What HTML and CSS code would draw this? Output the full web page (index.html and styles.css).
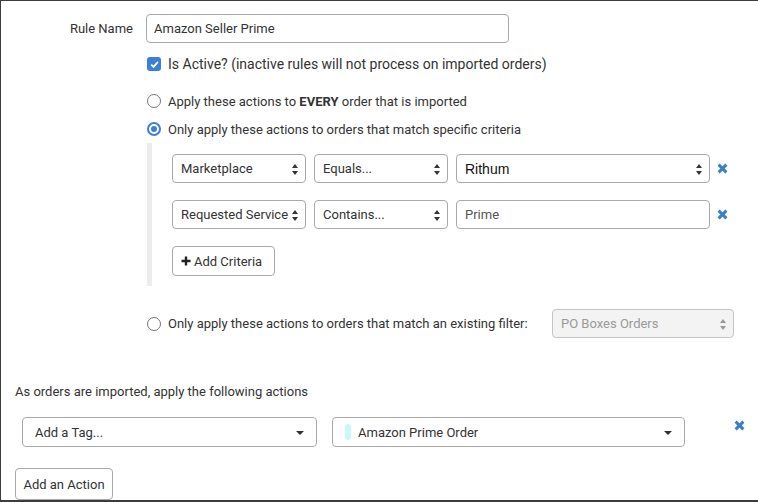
FILE: index.html
```html
<!DOCTYPE html>
<html lang="en">
<head>
    <meta charset="UTF-8">
    <title>Edit Rule</title>
    <link rel="stylesheet" href="styles.css">
</head>
<body>
    <div class="rule-form">
        <div class="name-row">
            <label class="name-label">Rule Name</label>
            <input type="text" class="text-input name-input" value="Amazon Seller Prime">
        </div>

        <div class="options">
            <div class="option-row check-row">
                <span class="checkbox checked">
                    <svg width="9" height="9" viewBox="0 0 9 9"><path d="M1.2 4.6 L3.6 6.9 L7.9 1.9" fill="none" stroke="#fff" stroke-width="1.8"/></svg>
                </span>
                <span>Is Active? (inactive rules will not process on imported orders)</span>
            </div>
            <div class="option-row radio-row first-radio">
                <span class="radio"></span>
                <span>Apply these actions to <b>EVERY</b> order that is imported</span>
            </div>
            <div class="option-row radio-row second-radio">
                <span class="radio checked"></span>
                <span>Only apply these actions to orders that match specific criteria</span>
            </div>

            <div class="criteria">
                <div class="criteria-row">
                    <div class="select field-select">Marketplace<span class="updown"></span></div>
                    <div class="select op-select">Equals...<span class="updown"></span></div>
                    <div class="select value-select">Rithum<span class="updown"></span></div>
                    <span class="remove"></span>
                </div>
                <div class="criteria-row">
                    <div class="select field-select">Requested Service<span class="updown"></span></div>
                    <div class="select op-select">Contains...<span class="updown"></span></div>
                    <div class="text-input value-input">Prime</div>
                    <span class="remove"></span>
                </div>
                <button class="btn add-criteria">
                    <svg width="10" height="10" viewBox="0 0 10 10"><path d="M5 0.5 V9.5 M0.5 5 H9.5" stroke="#222" stroke-width="2.4"/></svg>
                    Add Criteria
                </button>
            </div>

            <div class="option-row radio-row filter-row">
                <span class="radio"></span>
                <span class="filter-text">Only apply these actions to orders that match an existing filter:</span>
                <div class="select filter-select">PO Boxes Orders<span class="updown"></span></div>
            </div>
        </div>

        <div class="actions-title">As orders are imported, apply the following actions</div>
        <div class="action-row">
            <div class="select dropdown action-select">Add a Tag...<span class="caret"></span></div>
            <div class="select dropdown tag-select"><span class="swatch"></span>Amazon Prime Order<span class="caret"></span></div>
            <span class="remove action-remove"></span>
        </div>
        <button class="btn add-action">Add an Action</button>
    </div>
</body>
</html>
```

FILE: styles.css
```css
body {
    margin: 0;
    background: #fff;
    font-family: Roboto, "Liberation Sans", sans-serif;
    font-size: 13px;
    color: #333;
}
.rule-form {
    width: 758px;
    height: 502px;
    box-sizing: border-box;
    border-top: 1px solid #3c3c3c;
    border-left: 1px solid #3c3c3c;
    border-bottom: 2px solid #3c3c3c;
    overflow: hidden;
}
.name-row {
    display: flex;
    align-items: center;
    margin-top: 13px;
}
.name-label {
    width: 145px;
    padding-right: 13px;
    box-sizing: border-box;
    text-align: right;
    flex-shrink: 0;
}
.text-input {
    box-sizing: border-box;
    height: 29px;
    border: 1px solid #a9a9a9;
    border-radius: 4px;
    font: inherit;
    color: #333;
    padding: 0 7px;
    background: #fff;
}
.name-input {
    width: 363px;
    outline: none;
}
.options {
    margin-left: 145px;
}
.option-row {
    display: flex;
    align-items: center;
    height: 20px;
}
.check-row {
    margin-top: 11px;
    font-size: 14px;
}
.first-radio {
    margin-top: 17px;
}
.second-radio {
    margin-top: 8px;
}
.checkbox {
    width: 14px;
    height: 14px;
    margin: 0 7px 0 1px;
    border-radius: 3px;
    background: #3b7fd6;
    display: flex;
    align-items: center;
    justify-content: center;
}
.radio {
    width: 14px;
    height: 14px;
    box-sizing: border-box;
    border: 1.5px solid #767676;
    border-radius: 50%;
    margin: 0 7px 0 1px;
    flex-shrink: 0;
}
.radio.checked {
    border: 2px solid #3b7fd6;
    display: flex;
    align-items: center;
    justify-content: center;
}
.radio.checked::after {
    content: "";
    width: 6px;
    height: 6px;
    border-radius: 50%;
    background: #3b7fd6;
}
.criteria {
    margin: 4px 0 0 1px;
    padding: 11px 0 10px 20px;
    border-left: 5px solid #ececec;
}
.criteria-row {
    display: flex;
    align-items: center;
    gap: 8px;
    margin-bottom: 17px;
}
.select {
    position: relative;
    box-sizing: border-box;
    height: 29px;
    border: 1px solid #a9a9a9;
    border-radius: 4px;
    padding: 0 8px;
    display: flex;
    align-items: center;
    background: #fff;
    white-space: nowrap;
}
.updown {
    position: absolute;
    right: 6px;
    top: 9px;
    width: 7px;
    height: 11px;
}
.updown::before, .updown::after {
    content: "";
    position: absolute;
    left: 0;
    border-left: 3.5px solid transparent;
    border-right: 3.5px solid transparent;
}
.updown::before {
    top: 0;
    border-bottom: 4px solid #333;
}
.updown::after {
    bottom: 0;
    border-top: 4px solid #333;
}
.field-select {
    width: 134px;
}
.op-select {
    width: 134px;
}
.value-select {
    width: 254px;
    font-family: "Liberation Sans", Arial, sans-serif;
    font-size: 14px;
    color: #111;
}
.value-input {
    width: 254px;
    display: flex;
    align-items: center;
    color: #555;
    padding: 0 8px;
}
.remove {
    position: relative;
    width: 9px;
    height: 9px;
}
.remove::before, .remove::after {
    content: "";
    position: absolute;
    left: -1px;
    top: 3px;
    width: 11px;
    height: 3px;
    background: #3a80c9;
    transform: rotate(45deg);
}
.remove::after {
    transform: rotate(-45deg);
}
.btn {
    box-sizing: border-box;
    border: 1px solid #a9a9a9;
    border-radius: 4px;
    background: #fff;
    font: inherit;
    color: #333;
    cursor: pointer;
}
.add-criteria {
    height: 30px;
    width: 103px;
    display: flex;
    align-items: center;
    gap: 3px;
    padding: 0 0 0 8px;
}
.filter-row {
    margin-top: 23px;
    height: 29px;
}
.filter-text {
    width: 384px;
}
.filter-select {
    width: 182px;
    background: #f3f3f3;
    border-color: #c4c4c4;
    color: #999;
}
.filter-select .updown::before {
    border-bottom-color: #999;
}
.filter-select .updown::after {
    border-top-color: #999;
}
.actions-title {
    margin: 44px 0 0 14px;
    line-height: 20px;
}
.action-row {
    display: flex;
    align-items: center;
    margin: 15px 0 0 21px;
}
.dropdown {
    height: 30px;
    padding-left: 12px;
}
.caret {
    position: absolute;
    right: 12px;
    top: 13px;
    border-left: 4px solid transparent;
    border-right: 4px solid transparent;
    border-top: 4px solid #333;
}
.action-select {
    width: 295px;
}
.tag-select {
    width: 353px;
    margin-left: 15px;
}
.swatch {
    width: 6px;
    height: 16px;
    border-radius: 3px;
    background: #c9f6fb;
    margin-right: 7px;
}
.action-remove {
    margin-left: 50px;
    top: -7px;
}
.add-action {
    margin: 21px 0 0 14px;
    height: 32px;
    width: 98px;
}
```
